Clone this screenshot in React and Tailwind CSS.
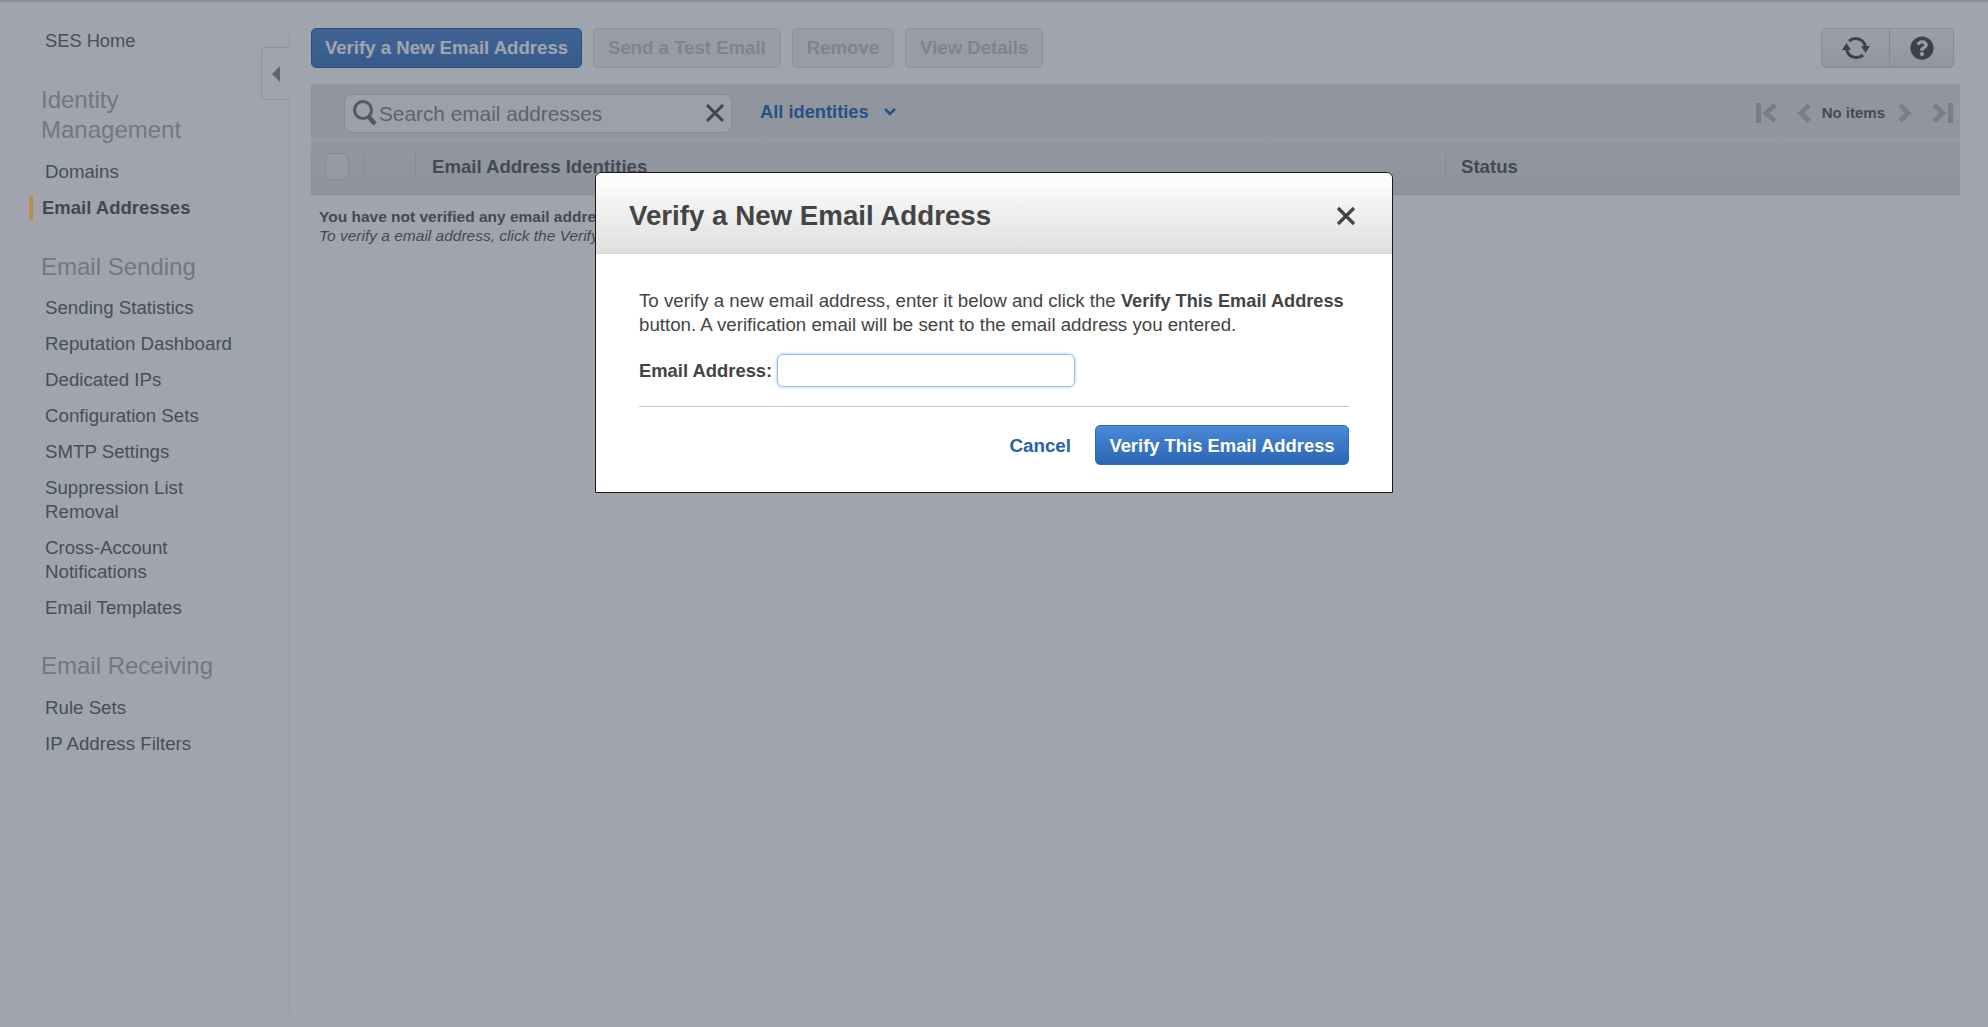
import { FaQuestionCircle } from "react-icons/fa";

const font = { fontFamily: '"Liberation Sans", Arial, sans-serif' };

function NavItem({ children, active }) {
  if (active) {
    return (
      <div className="flex h-6 items-center -ml-[16px] mt-3 text-[18.5px] leading-6 font-bold text-[#5c5f63]">
        <span className="relative z-10 w-1 h-[26px] rounded-sm bg-[#bd8c55] mr-[9px]"></span>
        {children}
      </div>
    );
  }
  return <div className="mt-3 text-[18.7px] leading-6 text-[#666a6e]">{children}</div>;
}

function NavHeading({ children }) {
  return <div className="text-[24px] leading-[30px] text-[#aeb1b5] -ml-1">{children}</div>;
}

function Sidebar() {
  return (
    <aside className="w-[290px] shrink-0 pl-[45px] pr-[40px] pt-7 border-r border-[#ececec] relative mt-[30px] mb-3">
      <div className="-mt-[29px] text-[18.3px] leading-6 text-[#666a6e]">SES Home</div>
      <div className="mt-[32px] pb-[3px]">
        <NavHeading>Identity Management</NavHeading>
      </div>
      <NavItem>Domains</NavItem>
      <NavItem active>Email Addresses</NavItem>
      <div className="mt-[32px] pb-[2px]">
        <NavHeading>Email Sending</NavHeading>
      </div>
      <NavItem>Sending Statistics</NavItem>
      <NavItem>Reputation Dashboard</NavItem>
      <NavItem>Dedicated IPs</NavItem>
      <NavItem>Configuration Sets</NavItem>
      <NavItem>SMTP Settings</NavItem>
      <NavItem>Suppression List Removal</NavItem>
      <NavItem>Cross-Account Notifications</NavItem>
      <NavItem>Email Templates</NavItem>
      <div className="mt-[31px] pb-[3px]">
        <NavHeading>Email Receiving</NavHeading>
      </div>
      <NavItem>Rule Sets</NavItem>
      <NavItem>IP Address Filters</NavItem>
      <div className="absolute right-[-1px] top-[17px] w-[29px] h-[53px] bg-white border border-r-0 border-[#e2e2e2] rounded-l flex items-center justify-center">
        <svg width="10" height="16" viewBox="0 0 10 16"><polygon points="9,0 9,16 1,8" fill="#8e9196" /></svg>
      </div>
    </aside>
  );
}

function ToolButton({ children, primary }) {
  if (primary) {
    return (
      <button className="h-10 w-[271px] rounded-[5px] border border-[#3a6cae] bg-gradient-to-b from-[#5a90d6] to-[#4a7fc4] text-[18.6px] font-bold text-white">
        {children}
      </button>
    );
  }
  return (
    <button className="h-10 px-[14px] rounded-[5px] border border-[#e2e2e2] bg-[#f2f2f2] text-[18.6px] font-bold text-[#c6c6c6]">
      {children}
    </button>
  );
}

function RefreshIcon() {
  return (
    <svg width="28" height="26" viewBox="0 0 28 26" fill="none">
      <path d="M7 6A10 10 0 0 1 23.5 12" stroke="#555" strokeWidth="3" />
      <path d="M21 20A10 10 0 0 1 4.5 14" stroke="#555" strokeWidth="3" />
      <polygon points="19,11 28,11 23.5,18" fill="#555" />
      <polygon points="0,15 9,15 4.5,8" fill="#555" />
    </svg>
  );
}

function Pager() {
  const c = "#babcbf";
  return (
    <div className="flex items-center">
      <svg width="22" height="22" viewBox="0 0 22 22" fill="none">
        <rect x="0" y="1" width="5" height="20" fill={c} />
        <path d="M19 3l-9 8 9 8" stroke={c} strokeWidth="5" />
      </svg>
      <svg className="ml-[19px]" width="14" height="22" viewBox="0 0 14 22" fill="none">
        <path d="M12 3l-8 8 8 8" stroke={c} strokeWidth="5" />
      </svg>
      <span className="ml-[11px] text-[15px] font-bold text-[#5f6266]">No items</span>
      <svg className="ml-[13px]" width="14" height="22" viewBox="0 0 14 22" fill="none">
        <path d="M2 3l8 8-8 8" stroke={c} strokeWidth="5" />
      </svg>
      <svg className="ml-[19px]" width="22" height="22" viewBox="0 0 22 22" fill="none">
        <path d="M3 3l9 8-9 8" stroke={c} strokeWidth="5" />
        <rect x="17" y="1" width="5" height="20" fill={c} />
      </svg>
    </div>
  );
}

function Main() {
  return (
    <main className="flex-1 pl-[21px] pr-[28px] pt-7">
      <div className="flex items-center justify-between">
        <div className="flex gap-[11px]">
          <ToolButton primary>Verify a New Email Address</ToolButton>
          <ToolButton>Send a Test Email</ToolButton>
          <ToolButton>Remove</ToolButton>
          <ToolButton>View Details</ToolButton>
        </div>
        <div className="flex h-10 w-[133px] mr-[6px] rounded-[5px] border border-[#d6d6d6] bg-gradient-to-b from-[#f7f7f7] to-[#e6e6e6]">
          <div className="w-[68px] flex items-center justify-center border-r border-[#cfcfcf]"><RefreshIcon /></div>
          <div className="flex-1 flex items-center justify-center"><FaQuestionCircle size={24} color="#555" /></div>
        </div>
      </div>

      <div className="mt-4 h-[55px] bg-[#e6e6e6] border-b border-[#f2f2f2] pl-[33px] pr-[7px] pt-[4px] flex items-center">
        <div className="w-[388px] h-[39px] rounded-lg border border-[#d4d4d4] bg-[#f8f8f8] flex items-center pl-[7px] pr-[6px]">
          <svg width="26" height="28" viewBox="0 0 26 28" fill="none">
            <circle cx="11" cy="11" r="8.5" stroke="#7c7c7c" strokeWidth="3" />
            <path d="M17 18l6 7" stroke="#7c7c7c" strokeWidth="4.5" />
          </svg>
          <span className="ml-[1px] pt-[2px] flex-1 text-[20.8px] text-[#8b8e91]">Search email addresses</span>
          <svg width="20" height="20" viewBox="0 0 20 20" fill="none">
            <path d="M2 2l16 16M18 2L2 18" stroke="#5a5a5a" strokeWidth="3" />
          </svg>
        </div>
        <span className="ml-[28px] -mt-[3px] text-[18.3px] font-bold text-[#2f6cc0]">All identities</span>
        <svg className="ml-[15px] -mt-[3px]" width="12" height="8" viewBox="0 0 12 8" fill="none">
          <path d="M1 1l5 5 5-5" stroke="#2f6cc0" strokeWidth="2.5" />
        </svg>
        <div className="ml-auto"><Pager /></div>
      </div>

      <div className="h-[56px] bg-gradient-to-b from-[#e8e9ea] to-[#dfe0e2] border-b border-[#d2d3d5] flex items-center text-[18.6px] font-bold text-[#5f6266]">
        <div className="w-[24px] h-[27px] ml-[14px] rounded-md border border-[#d0d0d0] bg-[#ededee]"></div>
        <div className="ml-[14px] h-[27px] w-[53px] border-x border-[#d2d3d5]"></div>
        <div className="ml-[16px] w-[1013px]">Email Address Identities</div>
        <div className="h-[27px] border-l border-[#d2d3d5] pl-[15px] flex items-center">Status</div>
      </div>

      <div className="mt-[12px] ml-2 text-[15.5px] leading-[19px] text-[#5f6266]">
        <div className="font-bold">You have not verified any email addresses with Amazon SES.</div>
        <div className="italic">To verify a email address, click the Verify a New Email Address button.</div>
      </div>
    </main>
  );
}

function Modal() {
  return (
    <div className="absolute left-[595px] top-[172px] w-[798px] h-[321px] bg-white border border-[#1a1a1a] rounded-t-md text-[#444]">
      <div className="h-[81px] bg-gradient-to-b from-white to-[#dfdfdf] border-b border-[#d8d8d8] rounded-t-md flex items-center justify-between pl-[33px] pr-[36px] pt-[5px]">
        <h2 className="text-[27.7px] font-bold text-[#444]">Verify a New Email Address</h2>
        <svg width="20" height="20" viewBox="0 0 20 20" fill="none">
          <path d="M2 2l16 16M18 2L2 18" stroke="#444" strokeWidth="3.2" />
        </svg>
      </div>
      <div className="pl-[43px] pr-[43px] pt-[35px]">
        <p className="text-[18.7px] leading-[23px]">
          To verify a new email address, enter it below and click the <b className="text-[18.2px]">Verify This Email Address</b> button. A verification email will be sent to the email address you entered.
        </p>
        <div className="flex items-center mt-[18px]">
          <label className="text-[18.4px] font-bold">Email Address:</label>
          <input className="ml-[5px] w-[298px] h-[33px] rounded-md border border-[#8ec0f5] shadow-[0_0_3px_#8ec0f5] outline-none" />
        </div>
        <div className="mt-[19px] border-t border-[#c8c8c8]"></div>
        <div className="mt-[18px] flex items-center justify-end">
          <span className="mt-[3px] text-[18.8px] font-bold text-[#2462ad]">Cancel</span>
          <button className="ml-6 w-[254px] h-10 pt-[1px] rounded-[5px] border border-[#2f6db8] bg-gradient-to-b from-[#4a8ad8] to-[#2b66b4] text-[18.4px] font-bold text-white">
            Verify This Email Address
          </button>
        </div>
      </div>
    </div>
  );
}

export default function App() {
  return (
    <div className="relative h-[1027px] w-[1988px] overflow-hidden bg-white" style={font}>
      <div className="flex h-full">
        <Sidebar />
        <Main />
      </div>
      <div className="absolute inset-0 bg-[#1c283c]/[0.42] border-t-2 border-[#8a909b]"></div>
      <Modal />
    </div>
  );
}
